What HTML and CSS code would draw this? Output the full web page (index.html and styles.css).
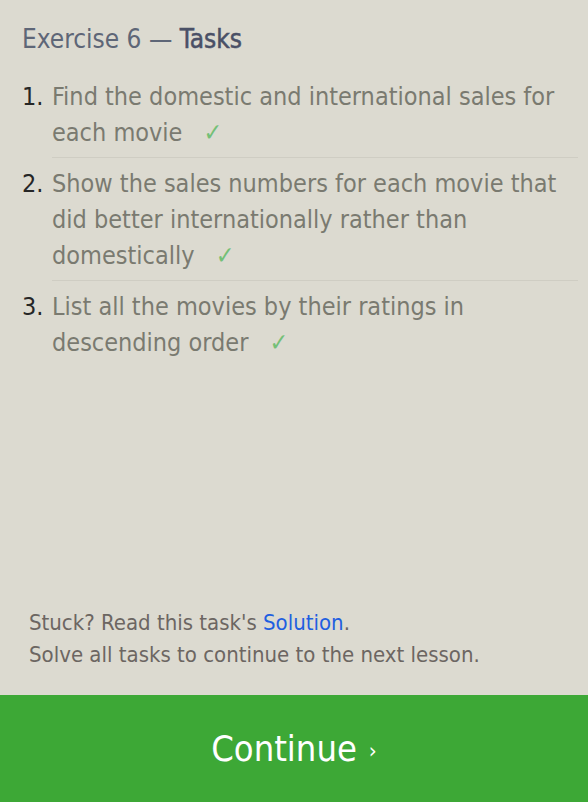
FILE: index.html
```html
<!DOCTYPE html>
<html>
<head>
<meta charset="utf-8">
<link rel="stylesheet" href="styles.css">
</head>
<body>
<div class="page">
  <div class="content">
    <h2 class="title">Exercise 6 — <span class="strong">Tasks</span></h2>
    <ol class="tasks">
      <li class="task"><span class="num">1.</span><span class="text">Find the domestic and international sales for each movie <span class="check">✓</span></span></li>
      <li class="task"><span class="num">2.</span><span class="text">Show the sales numbers for each movie that did better internationally rather than domestically <span class="check">✓</span></span></li>
      <li class="task last"><span class="num">3.</span><span class="text">List all the movies by their ratings in descending order <span class="check">✓</span></span></li>
    </ol>
  </div>
  <div class="footer">
    <p class="note">Stuck? Read this task's <a class="link" href="#">Solution</a>.</p>
    <p class="note">Solve all tasks to continue to the next lesson.</p>
  </div>
  <div class="continue">Continue<span class="chev">›</span></div>
</div>
</body>
</html>
```

FILE: styles.css
```css
html, body {
  margin: 0;
  padding: 0;
  background: #dcdad0;
}
body {
  font-family: "DejaVu Sans Condensed", "DejaVu Sans", sans-serif;
}
.page {
  width: 588px;
  height: 802px;
  display: flex;
  flex-direction: column;
}
.content {
  flex: 1;
  padding: 22px 10px 0 22px;
}
.title {
  margin: 0 0 23px 0;
  font-size: 26px;
  font-weight: normal;
  line-height: 34px;
  color: #5e6677;
}
.title .strong {
  color: #4a5066;
  -webkit-text-stroke: 0.5px #4a5066;
}
.tasks {
  list-style: none;
  margin: 0;
  padding: 0;
}
.task {
  display: flex;
  font-size: 25px;
  line-height: 36px;
}
.num {
  width: 30px;
  flex: none;
  color: #262626;
}
.text {
  flex: 1;
  color: #7a7a70;
  padding-bottom: 6px;
  margin-bottom: 8px;
  border-bottom: 1px solid #cfcdc3;
}
.task.last .text {
  border-bottom: none;
}
.check {
  color: #74c077;
  margin-left: 14px;
}
.footer {
  padding: 0 10px 24px 29px;
}
.note {
  margin: 0;
  font-size: 22px;
  line-height: 32px;
  color: #6c6662;
}
.link {
  color: #1f5fe0;
  text-decoration: none;
}
.continue {
  height: 107px;
  background: #3da836;
  color: #ffffff;
  font-size: 36px;
  display: flex;
  align-items: center;
  justify-content: center;
}
.chev {
  font-size: 22px;
  margin-left: 12px;
  margin-top: 4px;
}
```
